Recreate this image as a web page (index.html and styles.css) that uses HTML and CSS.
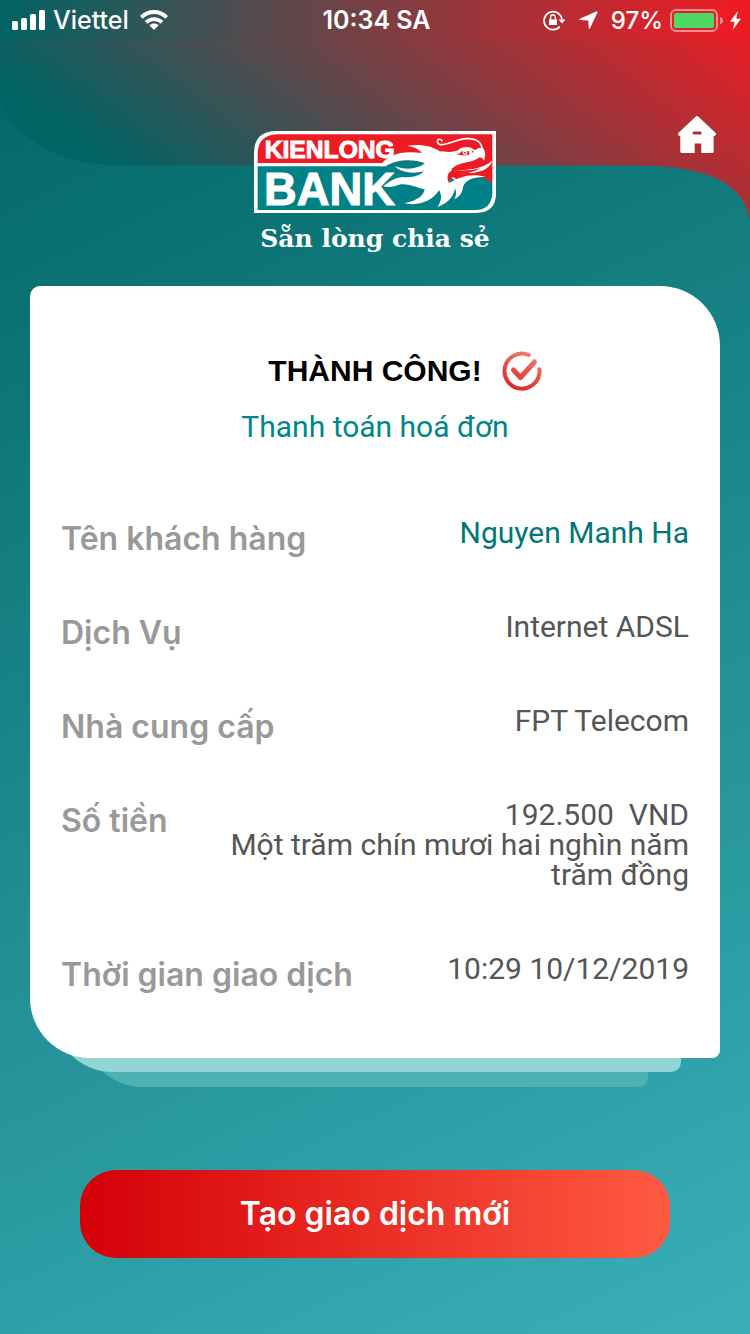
FILE: index.html
```html
<!DOCTYPE html>
<html lang="vi">
<head>
<meta charset="utf-8">
<meta name="viewport" content="width=device-width, initial-scale=1">
<title>Kienlong Bank</title>
<link rel="stylesheet" href="styles.css">
</head>
<body>
<div class="screen">
  <svg class="backdrop" viewBox="0 0 750 220" preserveAspectRatio="none" aria-hidden="true">
    <defs>
      <linearGradient id="glow" gradientUnits="userSpaceOnUse" x1="0" y1="80" x2="307" y2="-318">
        <stop offset="0" stop-color="#006465"/>
        <stop offset="1" stop-color="#ed1c24"/>
      </linearGradient>
      <linearGradient id="bar" x1="0" x2="1" y1="0" y2="0">
        <stop offset="0" stop-color="#006465"/>
        <stop offset="0.97" stop-color="#ed1c24"/>
      </linearGradient>
    </defs>
    <path fill="url(#glow)" d="M0 0H750V220C742 178 700 165.500 630 165.500H120C50 165.500 8 130 0 100Z"/>
    <path fill="url(#bar)" d="M0 0H750V39H0Z"/>
  </svg>

  <div class="status">
    <div class="status-left">
      <svg width="34" height="20" viewBox="0 0 34 20" fill="#fff" aria-hidden="true">
        <rect x="0" y="11" width="6" height="9" rx="1.500"/><rect x="9" y="8" width="6" height="12" rx="1.500"/><rect x="18" y="4" width="6" height="16" rx="1.500"/><rect x="27" y="0" width="6" height="20" rx="1.500"/>
      </svg>
      <span class="carrier">Viettel</span>
      <svg class="wifi" width="28" height="20" viewBox="0 0 28 20" aria-hidden="true">
        <path fill="none" stroke="#fff" stroke-width="3.800" d="M1.300 7.400C8.500 .2 19.500 .2 26.700 7.400M6 12.400C10.500 7.900 17.500 7.900 22 12.400"/>
        <path fill="#fff" d="M14 20L9.300 15.300C11.800 13 16.200 13 18.700 15.300Z"/>
      </svg>
    </div>
    <time class="clock">10:34 SA</time>
    <div class="status-right">
      <svg width="23" height="21" viewBox="0 0 23 21" aria-hidden="true">
        <path fill="none" stroke="#fff" stroke-width="1.800" d="M16.800 16.600A9 9 0 1 1 19 9.500"/>
        <path fill="#fff" d="M15.500 9.500H22.500L19 13.500ZM6 9.500H14V15H6Z"/>
        <path fill="none" stroke="#fff" stroke-width="1.400" d="M7.600 10V7.500a2.400 2.700 0 0 1 4.800 0V10"/>
      </svg>
      <svg class="arrow" width="19" height="18" viewBox="0 0 19 18" fill="#fff" aria-hidden="true"><path d="M17.800 .2Q19 0 18.600 1.300L11 17.300Q10 18.500 9.700 17L9.300 9.400L1 9Q-.3 8.600 .9 7.800Z"/></svg>
      <span>97%</span>
      <svg width="53" height="23" viewBox="0 0 53 23" aria-hidden="true">
        <rect x="1" y="1" width="46" height="21" rx="5" fill="none" stroke="#fff" stroke-opacity=".5" stroke-width="2"/>
        <path fill="#fff" fill-opacity=".5" d="M50 8C54 9.500 54 14 50 15.500Z"/>
        <rect x="4" y="4" width="40" height="15" rx="2" fill="#4cd964"/>
      </svg>
      <svg width="11" height="19" viewBox="0 0 11 19" fill="#fff" aria-hidden="true"><path d="M7.800 0L0 10.700H4.600L2.600 19L11 7.700H6.300Z"/></svg>
    </div>
  </div>

  <header class="header">
    <div class="brand">
      <svg class="logo" viewBox="27 33 726 246" role="img" aria-label="Kienlong Bank">
        <path fill="#fff" d="M95 33H753V220Q753 279 692 279H27V100Q27 33 95 33Z"/>
        <path fill="#ed1c24" d="M96 43H742V192Q700 155 650 185L540 130H38V100Q40 45 96 43Z"/>
        <path fill="#fff" d="M38 130H430V139H38Z"/>
        <path fill="#008187" d="M38 139H415C450 118 500 115 540 130L640 185C670 163 710 160 742 191V218Q740 269 690 270H38Z"/>
        <path fill="#fff" d="M485 78C520 71 560 77 584 94C606 96 632 98 642 88C656 78 677 78 690 91C697 83 707 81 713 85C723 93 722 108 717 122C713 114 708 111 700 114C684 128 641 126 620 146C617 151 623 154 632 152C670 148 708 149 742 122C733 151 697 160 660 159C626 161 613 173 614 189C643 170 680 159 722 171C685 169 661 181 655 198C652 219 644 231 628 237C635 226 634 216 630 205C623 239 603 251 577 262C591 241 591 225 582 211C563 243 520 259 478 250C520 241 536 226 539 208C515 203 494 191 467 193C448 200 431 203 414 199C432 187 446 173 472 171C500 174 520 169 537 154C505 163 470 158 448 139C483 150 515 149 540 130C505 116 455 118 422 139H405C426 103 470 91 531 99C521 88 507 80 485 78Z"/>
        <path fill="#ed1c24" d="M635 104C648 99 650 93 654 93L673 94V103C663 110 649 103 635 104Z"/>
        <circle cx="660" cy="98" r="7" fill="#fff"/><circle cx="660" cy="98" r="3" fill="#ed1c24"/>
        <path fill="#ed1c24" d="M679 90Q686 91 687 99Q681 97 679 90ZM612 190C604 172 606 158 624 150C650 153 680 152 706 144C690 156 670 159 650 161C624 166 615 175 612 190Z"/>
        <path fill="none" stroke="#fff" stroke-width="5" stroke-linecap="round" d="M591 62C580 50 571 66 583 73C598 80 632 58 664 56C696 54 711 69 711 88"/>
        <text class="logo-top" x="59" y="114">KIENLONG</text>
        <text class="logo-bottom" x="57" y="254">BANK</text>
      </svg>
      <p class="slogan">Sẵn lòng chia sẻ</p>
    </div>
    <button class="home" type="button" aria-label="Trang chủ">
      <svg width="40" height="38" viewBox="0 0 40 38" aria-hidden="true"><path fill="#fff" fill-rule="evenodd" d="M18.800 1.500Q20 .5 21.200 1.500L38.400 17.700Q40 19.300 38 20.500L36.600 21.500V36.500Q36.600 38 35 38H24.300V28.500H17.700V38H5Q3.300 38 3.300 36.500V21.500L2 20.500Q0 19.300 1.600 17.700ZM17 16.500a1.300 1.300 0 0 0 0 3H23.200a1.300 1.300 0 0 0 0-3Z"/></svg>
    </button>
  </header>

  <main class="main">
    <section class="card">
      <div class="result">
        <h1 class="title">THÀNH CÔNG!</h1>
        <svg width="40" height="40" viewBox="0 0 40 40" fill="none" stroke="url(#tick)" stroke-width="4" stroke-linecap="round" stroke-linejoin="round" aria-hidden="true">
          <defs><linearGradient id="tick" gradientUnits="userSpaceOnUse" x1="10" y1="38" x2="28" y2="0"><stop offset="0" stop-color="#dc2527"/><stop offset="1" stop-color="#f1816f"/></linearGradient></defs>
          <path d="M26.800 4A17.500 17.500 0 1 0 37.400 18.200"/><path stroke-width="5" d="M11.500 19L18.500 26.500L32.500 11"/>
        </svg>
      </div>
      <p class="subtitle">Thanh toán hoá đơn</p>
      <dl class="details">
        <div class="row"><dt>Tên khách hàng</dt><dd class="customer">Nguyen Manh Ha</dd></div>
        <div class="row"><dt>Dịch Vụ</dt><dd>Internet ADSL</dd></div>
        <div class="row"><dt>Nhà cung cấp</dt><dd>FPT Telecom</dd></div>
        <div class="row"><dt>Số tiền</dt><dd>192.500&nbsp; VND<br>Một trăm chín mươi hai nghìn năm trăm đồng</dd></div>
        <div class="row"><dt>Thời gian giao dịch</dt><dd>10:29 10/12/2019</dd></div>
      </dl>
    </section>
    <div class="layer layer-near"></div>
    <div class="layer layer-far"></div>
    <button class="action" type="button">Tạo giao dịch mới</button>
  </main>
</div>
</body>
</html>
```

FILE: styles.css
```css
* { box-sizing: border-box; }

body {
  margin: 0;
  font-family: Inter, "Noto Sans", sans-serif;
}

h1, p, dl, dd { margin: 0; }

button {
  border: 0;
  padding: 0;
  background: none;
  cursor: pointer;
}

svg { display: block; flex: none; }

.screen {
  position: relative;
  isolation: isolate;
  min-height: 100vh;
  padding-bottom: 76px;
  background: linear-gradient(155deg, #006464 0%, #3aafb8 100%);
}

.backdrop {
  position: absolute;
  top: 0;
  left: 0;
  z-index: -1;
  width: 100%;
  height: 220px;
}

.status {
  display: grid;
  grid-template-columns: 1fr auto 1fr;
  align-items: center;
  height: 40px;
  padding: 0 9px 0 12px;
  color: #fff;
  font-size: 24px;
  font-weight: 500;
}

.status-left,
.status-right {
  display: flex;
  align-items: center;
  gap: 7px;
}

.status-right { justify-content: flex-end; }
.carrier { font-size: 25px; }
.wifi { margin-left: 4px; }
.arrow { margin: 0 6px; }

.clock {
  font-size: 25px;
  font-weight: 600;
}

.header {
  display: grid;
  grid-template-columns: 1fr auto 1fr;
  align-items: start;
  padding: 75px 33px 0;
}

.brand {
  grid-column: 2;
  margin-top: 16px;
  text-align: center;
}

.logo {
  width: 242px;
  margin: 0 auto;
  overflow: visible;
}

.logo-top,
.logo-bottom {
  fill: #fff;
  stroke: #fff;
  stroke-width: 3px;
  font-family: "Liberation Sans", sans-serif;
  font-weight: 700;
}

.logo-top { font-size: 74px; }
.logo-bottom { font-size: 136px; }

.slogan {
  margin-top: 10px;
  color: #fff;
  font: 700 25px/32px "DejaVu Serif", serif;
}

.home { justify-self: end; }

.main {
  display: flex;
  flex-direction: column;
  padding: 31px 30px 0;
}

.card {
  position: relative;
  z-index: 2;
  padding: 62px 31px;
  border-radius: 10px 60px 8px 60px;
  background: #fff;
}

.result {
  display: flex;
  align-items: center;
  justify-content: center;
  gap: 20px;
  padding-left: 60px;
}

.title {
  font: 700 30px/46px "Liberation Sans", sans-serif;
}

.subtitle {
  margin-top: 15px;
  color: #00868a;
  font: 400 30px/36px Roboto, sans-serif;
  text-align: center;
}

.details {
  display: flex;
  flex-direction: column;
  gap: 52px;
  margin-top: 73px;
}

.row {
  display: flex;
  justify-content: space-between;
}

.row dt {
  flex: none;
  color: #999;
  font-size: 32px;
  font-weight: 600;
  line-height: 42px;
}

.row dd {
  max-width: 480px;
  padding-bottom: 12px;
  color: #555;
  font: 400 30px/30px Roboto, sans-serif;
  text-align: right;
}

.row .customer { color: #007777; }

.layer {
  position: relative;
  height: 70px;
  border-radius: 0 0 10px 60px;
}

.layer-near {
  z-index: 1;
  margin: -56px 39px 0 23px;
  background: #92d5d5;
}

.layer-far {
  z-index: 0;
  margin: -55px 72px 0 53px;
  background: #50b1b3;
}

.action {
  height: 88px;
  margin: 83px 50px 0;
  border-radius: 36px;
  background: linear-gradient(90deg, #d40008, #ff5a41);
  color: #fff;
  font: 600 32px/40px Inter, sans-serif;
}
```
